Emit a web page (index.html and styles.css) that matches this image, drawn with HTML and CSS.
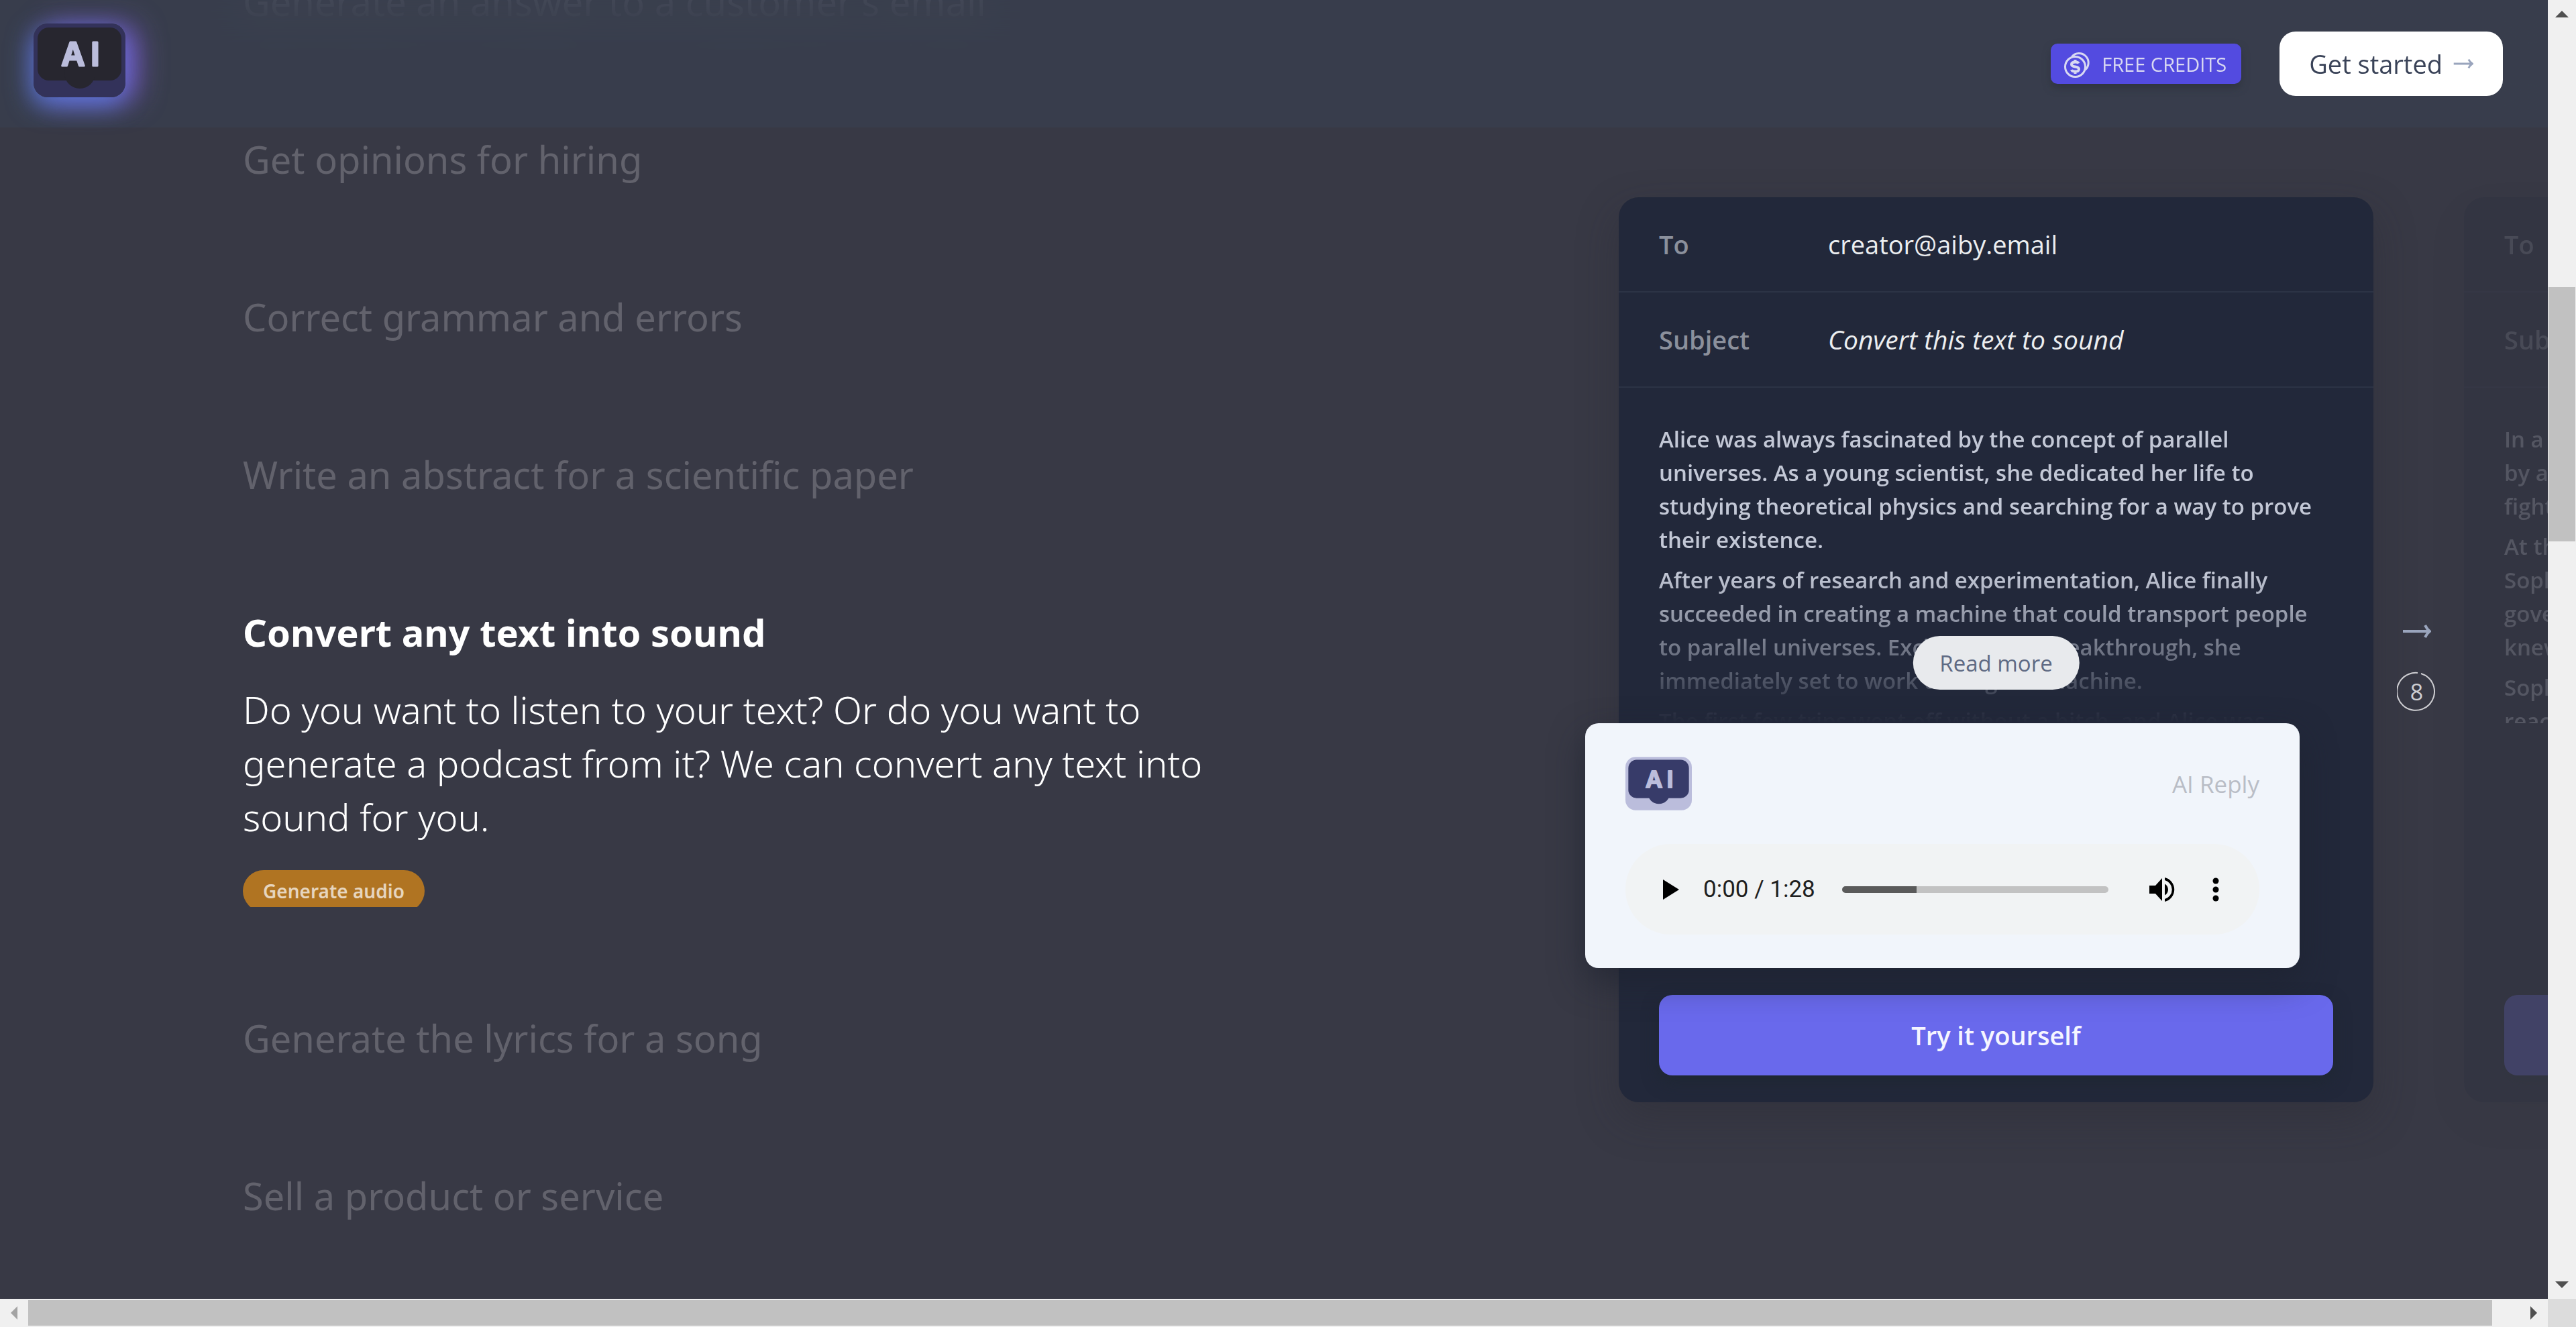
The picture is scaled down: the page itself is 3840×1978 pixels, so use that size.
FILE: index.html
```html
<!DOCTYPE html>
<html lang="en">
<head>
<meta charset="utf-8">
<title>AI by email</title>
<link rel="stylesheet" href="styles.css">
</head>
<body>
<div class="window">
  <div class="view">
    <header class="topbar">
      <a class="brand" href="#" aria-label="Home">
        <svg class="brand-logo" viewBox="0 0 137 110">
          <rect class="logo-back" width="137" height="110" rx="21"/>
          <rect class="logo-bubble" x="6" y="6" width="125" height="79" rx="17"/>
          <circle class="logo-bubble" cx="69" cy="74" r="23"/>
          <text class="logo-text" x="59 92" y="63">AI</text>
        </svg>
      </a>
      <nav class="actions">
        <button class="credits" type="button">
          <svg class="coins" viewBox="0 0 42 42" fill="none" stroke="currentColor" stroke-width="3">
            <path d="M11.500 10.500A14 14 0 1 1 31.500 30"/>
            <circle cx="16.500" cy="25.500" r="15"/>
            <path stroke-width="4" d="M21.500 20.500c-.5-1.500-2-2-5-2-3.500 0-5.500 1-5.500 3.500 0 5 11 2 11 7 0 2.500-2 3.500-5.500 3.500-3 0-5-.7-5.500-2.500M16.500 15v4M16.500 32v4"/>
          </svg>
          FREE CREDITS
        </button>
        <a class="start" href="#">Get started
          <svg class="arrow arrow-small" viewBox="0 0 42 22"><path d="M1 11h37M32 2q3 6 8 9q-5 3-8 9" fill="none" stroke="currentColor" stroke-width="4"/></svg>
        </a>
      </nav>
    </header>

    <main class="stage">
      <ul class="topics">
        <li><a class="topic" href="#">Generate an answer to a customer's email</a></li>
        <li><a class="topic" href="#">Get opinions for hiring</a></li>
        <li><a class="topic" href="#">Correct grammar and errors</a></li>
        <li><a class="topic" href="#">Write an abstract for a scientific paper</a></li>
        <li>
          <h2 class="topic topic-active">Convert any text into sound</h2>
          <p class="topic-about">Do you want to listen to your text? Or do you want to generate a podcast from it? We can convert any text into sound for you.</p>
          <div class="tags"><span class="tag">Generate audio</span></div>
        </li>
        <li><a class="topic" href="#">Generate the lyrics for a song</a></li>
        <li><a class="topic" href="#">Sell a product or service</a></li>
      </ul>

      <section class="carousel">
        <article class="card">
          <div class="field"><span class="field-name">To</span><span class="field-value">creator@aiby.email</span></div>
          <div class="field"><span class="field-name">Subject</span><em class="field-value">Convert this text to sound</em></div>
          <div class="message">
            <div class="message-text message-fade">
              <p>Alice was always fascinated by the concept of parallel universes. As a young scientist, she dedicated her life to studying theoretical physics and searching for a way to prove their existence.</p>
              <p>After years of research and experimentation, Alice finally succeeded in creating a machine that could transport people to parallel universes. Excited by her breakthrough, she immediately set to work testing the machine.</p>
              <p>The first few trips went off without a hitch, and Alice was</p>
            </div>
            <button class="more" type="button">Read more</button>
          </div>
          <div class="reply">
            <div class="reply-head">
              <svg class="reply-logo" viewBox="0 0 137 110">
                <rect class="logo-back" width="137" height="110" rx="21"/>
                <rect class="logo-bubble" x="6" y="6" width="125" height="79" rx="17"/>
                <circle class="logo-bubble" cx="69" cy="74" r="23"/>
                <text class="logo-text" x="59 92" y="63">AI</text>
              </svg>
              <span class="reply-label">AI Reply</span>
            </div>
            <div class="player">
              <button class="icon-button" type="button" aria-label="Play"><svg class="play-icon" viewBox="0 0 24 30"><path d="M0 0v30l24-15z"/></svg></button>
              <span class="time">0:00 / 1:28</span>
              <input class="seek" type="range" min="0" max="88" value="0" aria-label="Seek">
              <button class="icon-button" type="button" aria-label="Mute"><svg class="volume-icon" viewBox="0 0 38 36"><path d="M0 12h9L19 1v34L9 24H0zM23 9.500c3 1.500 5 5 5 8.500s-2 7-5 8.500zM23 0a18.500 18.500 0 0 1 0 36v-4a14.500 14.500 0 0 0 0-28z"/></svg></button>
              <button class="icon-button" type="button" aria-label="More options"><svg class="dots-icon" viewBox="0 0 10 36"><circle cx="5" cy="5" r="4.500"/><circle cx="5" cy="18" r="4.500"/><circle cx="5" cy="31" r="4.500"/></svg></button>
            </div>
          </div>
          <button class="try" type="button">Try it yourself</button>
        </article>

        <div class="rail">
          <svg class="arrow" viewBox="0 0 42 22"><path d="M0 11h38M33 2q3 6 7 9q-4 3-7 9" fill="none" stroke="currentColor" stroke-width="4"/></svg>
          <div class="countdown">
            <svg class="countdown-ring" viewBox="0 0 60 60"><path d="M36 3A28 28 0 1 1 31 2" fill="none" stroke="currentColor" stroke-width="2"/></svg>
            <span>8</span>
          </div>
        </div>

        <article class="card card-next">
          <div class="field"><span class="field-name">To</span><span class="field-value">creator@aiby.email</span></div>
          <div class="field"><span class="field-name">Subject</span><em class="field-value">Lyrics</em></div>
          <div class="message">
            <div class="message-text">
              <p>In a world ruled<br>by a few<br>fighting</p>
              <p>At the center<br>Sophia<br>government<br>knew</p>
              <p>Sophia<br>reached</p>
            </div>
          </div>
          <button class="try" type="button">Try it yourself</button>
        </article>
      </section>
    </main>
  </div>

  <div class="bar bar-y" aria-hidden="true">
    <span class="bar-end"><svg class="tri" viewBox="0 0 20 20"><path d="M10 5l10 10H0z"/></svg></span>
    <span class="space-above"></span><span class="thumb-y"></span><span class="space-below"></span>
    <span class="bar-end"><svg class="tri" viewBox="0 0 20 20"><path d="M10 15L0 5h20z"/></svg></span>
  </div>
  <div class="bar bar-x" aria-hidden="true">
    <span class="bar-end"><svg class="tri tri-off" viewBox="0 0 20 20"><path d="M5 10L15 0v20z"/></svg></span>
    <span class="thumb-x"></span><span class="space-after"></span>
    <span class="bar-end"><svg class="tri" viewBox="0 0 20 20"><path d="M15 10L5 0v20z"/></svg></span>
  </div>
  <div class="corner"></div>
</div>
</body>
</html>
```
FILE: styles.css
```css
* { box-sizing: border-box; }

body {
  margin: 0;
  background: #383945;
  font-family: "Open Sans", "Noto Sans", sans-serif;
  color: #fff;
}

button { font: inherit; border: 0; cursor: pointer; }
a { color: inherit; text-decoration: none; }
h2, p, ul { margin: 0; padding: 0; font-size: inherit; font-weight: inherit; }
ul { list-style: none; }
svg { display: block; flex: none; }

.window {
  display: grid;
  grid-template-columns: minmax(0, 1fr) 42px;
  grid-template-rows: minmax(0, 1fr) 42px;
  height: 100vh;
}

.view { position: relative; overflow: hidden; }

/* Top bar */
.topbar {
  position: absolute;
  top: 0;
  left: 0;
  right: 0;
  z-index: 2;
  display: flex;
  align-items: center;
  justify-content: space-between;
  height: 190px;
  padding: 0 67px 0 50px;
  background: rgba(56, 65, 82, .6);
  backdrop-filter: blur(30px);
}

.brand { padding-bottom: 10px; }

.brand-logo {
  width: 137px;
  height: 110px;
  border-radius: 21px;
  box-shadow: -4px 12px 36px rgba(88, 125, 225, .8), 16px 4px 44px rgba(140, 96, 235, .8);
}

.brand-logo .logo-back { fill: #33325a; }
.brand-logo .logo-bubble { fill: #27262f; }
.reply-logo .logo-back { fill: #bbbddc; }
.reply-logo .logo-bubble { fill: #373b69; }

.logo-text {
  fill: #bbbddc;
  stroke: #bbbddc;
  stroke-width: 3px;
  stroke-linejoin: round;
  font: 600 48px Inter, sans-serif;
  text-anchor: middle;
}

.actions { display: flex; align-items: center; gap: 57px; }

.credits {
  display: flex;
  align-items: center;
  gap: 14px;
  height: 60px;
  padding: 0 22px 0 20px;
  border-radius: 10px;
  background: #534be0;
  box-shadow: 0 6px 12px rgba(40, 44, 52, .5);
  color: #d8d8f2;
  font-size: 29px;
}

.coins { width: 42px; height: 42px; }

.start {
  display: flex;
  align-items: center;
  gap: 16px;
  height: 96px;
  padding: 0 44px;
  border-radius: 24px;
  background: #fff;
  color: #3a4358;
  font-size: 38px;
}

.arrow { width: 42px; height: 22px; color: #9aa5bd; }
.arrow-small { width: 30px; height: 16px; }

/* Topic list */
.stage {
  display: grid;
  grid-template-columns: minmax(0, 1fr) 1385px;
  padding-left: 362px;
}

.topics {
  display: flex;
  flex-direction: column;
  gap: 155px;
  max-width: 1450px;
  margin-top: -38px;
  font-family: "Noto Sans", "Open Sans", sans-serif;
  font-size: 56px;
  line-height: 80px;
}

.topic { display: block; color: #62626c; }
.topic-active { color: #fff; font-weight: 700; }
.topic-about { margin-top: 35px; font-weight: 300; }

.tags { height: 95px; padding-top: 40px; overflow: hidden; }

.tag {
  display: block;
  width: max-content;
  padding: 0 30px;
  border-radius: 32px;
  background: #b07422;
  color: #e6d5be;
  font-size: 28px;
  font-weight: 600;
  line-height: 62px;
}

/* Cards */
.carousel { display: flex; align-items: flex-start; padding-top: 294px; }

.card {
  flex: none;
  display: flex;
  flex-direction: column;
  width: 1125px;
  padding-bottom: 40px;
  border-radius: 30px;
  background: #22283a;
  box-shadow: 0 24px 60px rgba(40, 40, 48, .35);
}

.card-next { min-height: 1349px; opacity: .2; white-space: nowrap; }
.card-next .try { margin-top: auto; }

.field {
  display: flex;
  padding: 0 60px;
  border-bottom: 2px solid #2c3345;
  font-size: 38px;
  line-height: 140px;
}

.field-name { width: 252px; color: #8b909c; font-weight: 600; }
.field-value { color: #eceef0; }
em.field-value { font-size: 39px; }

.message { position: relative; padding: 52px 60px 0; }

.message-text {
  display: flex;
  flex-direction: column;
  gap: 10px;
  height: 448px;
  overflow: hidden;
  color: #c3c8d6;
  font-size: 33px;
  font-weight: 600;
  line-height: 50px;
}

.message-fade { mask-image: linear-gradient(#000 50%, transparent); }

.more {
  position: absolute;
  bottom: 50px;
  left: 50%;
  transform: translateX(-50%);
  height: 80px;
  padding: 0 40px;
  border-radius: 40px;
  background: #e8eaed;
  color: #5f6a83;
  font-size: 33px;
}

.reply {
  z-index: 1;
  display: flex;
  flex-direction: column;
  gap: 50px;
  margin: 0 110px 40px -50px;
  padding: 50px 60px;
  border-radius: 20px;
  background: #f1f5fb;
  box-shadow: 0 20px 50px rgba(28, 34, 46, .6);
}

.reply-head { display: flex; align-items: center; justify-content: space-between; }
.reply-logo { width: 99px; height: 80px; }
.reply-label { color: #b9bdc6; font-size: 35px; }

.player {
  display: flex;
  align-items: center;
  height: 135px;
  padding: 0 37px 0 40px;
  border-radius: 68px;
  background: #f1f3f4;
  color: #1f1f1f;
}

.icon-button {
  display: flex;
  align-items: center;
  justify-content: center;
  width: 56px;
  height: 80px;
  padding: 0;
  background: none;
}

.play-icon { width: 24px; height: 30px; }
.volume-icon { width: 38px; height: 36px; }
.dots-icon { width: 10px; height: 36px; }
.time { margin: 0 40px 0 20px; font: 35px Roboto, sans-serif; }

.seek {
  flex: 1;
  min-width: 0;
  height: 10px;
  margin: 0 52px 0 0;
  border-radius: 5px;
  appearance: none;
  background: linear-gradient(90deg, #5a5a5a 28%, #c2c2c2 28%);
}

.seek::-webkit-slider-thumb { appearance: none; width: 0; height: 0; }
.seek + .icon-button { margin-right: 24px; }

.try {
  height: 120px;
  margin: 0 60px;
  border-radius: 20px;
  background: #6969ec;
  box-shadow: 0 10px 24px rgba(28, 38, 46, .6);
  color: #f5f5ff;
  font-size: 38px;
  font-weight: 600;
}

.rail {
  flex: none;
  display: flex;
  flex-direction: column;
  align-items: center;
  gap: 49px;
  width: 135px;
  padding: 636px 6px 0 0;
}

.countdown {
  display: grid;
  place-items: center;
  width: 60px;
  height: 60px;
  color: #cfcfd3;
  font-size: 34px;
  line-height: 60px;
}

.countdown > * { grid-area: 1 / 1; }
.countdown-ring { width: 60px; height: 60px; }

/* Scroll bars */
.bar { display: flex; background: #f0f0f0; }
.bar-y { flex-direction: column; padding: 0 1px; }
.bar-x { padding: 2px 0; }
.bar-end { display: grid; place-items: center; flex: 0 0 42px; }
.tri { width: 20px; height: 20px; fill: #505050; }
.tri-off { fill: #a3a3a3; }
.thumb-y, .thumb-x { background: #c1c1c1; }
.space-above { flex: 386; }
.thumb-y { flex: 379; }
.space-below { flex: 1087; }
.thumb-x { flex: 3673; }
.space-after { flex: 41; }
.corner { background: #dcdcdc; }
```
